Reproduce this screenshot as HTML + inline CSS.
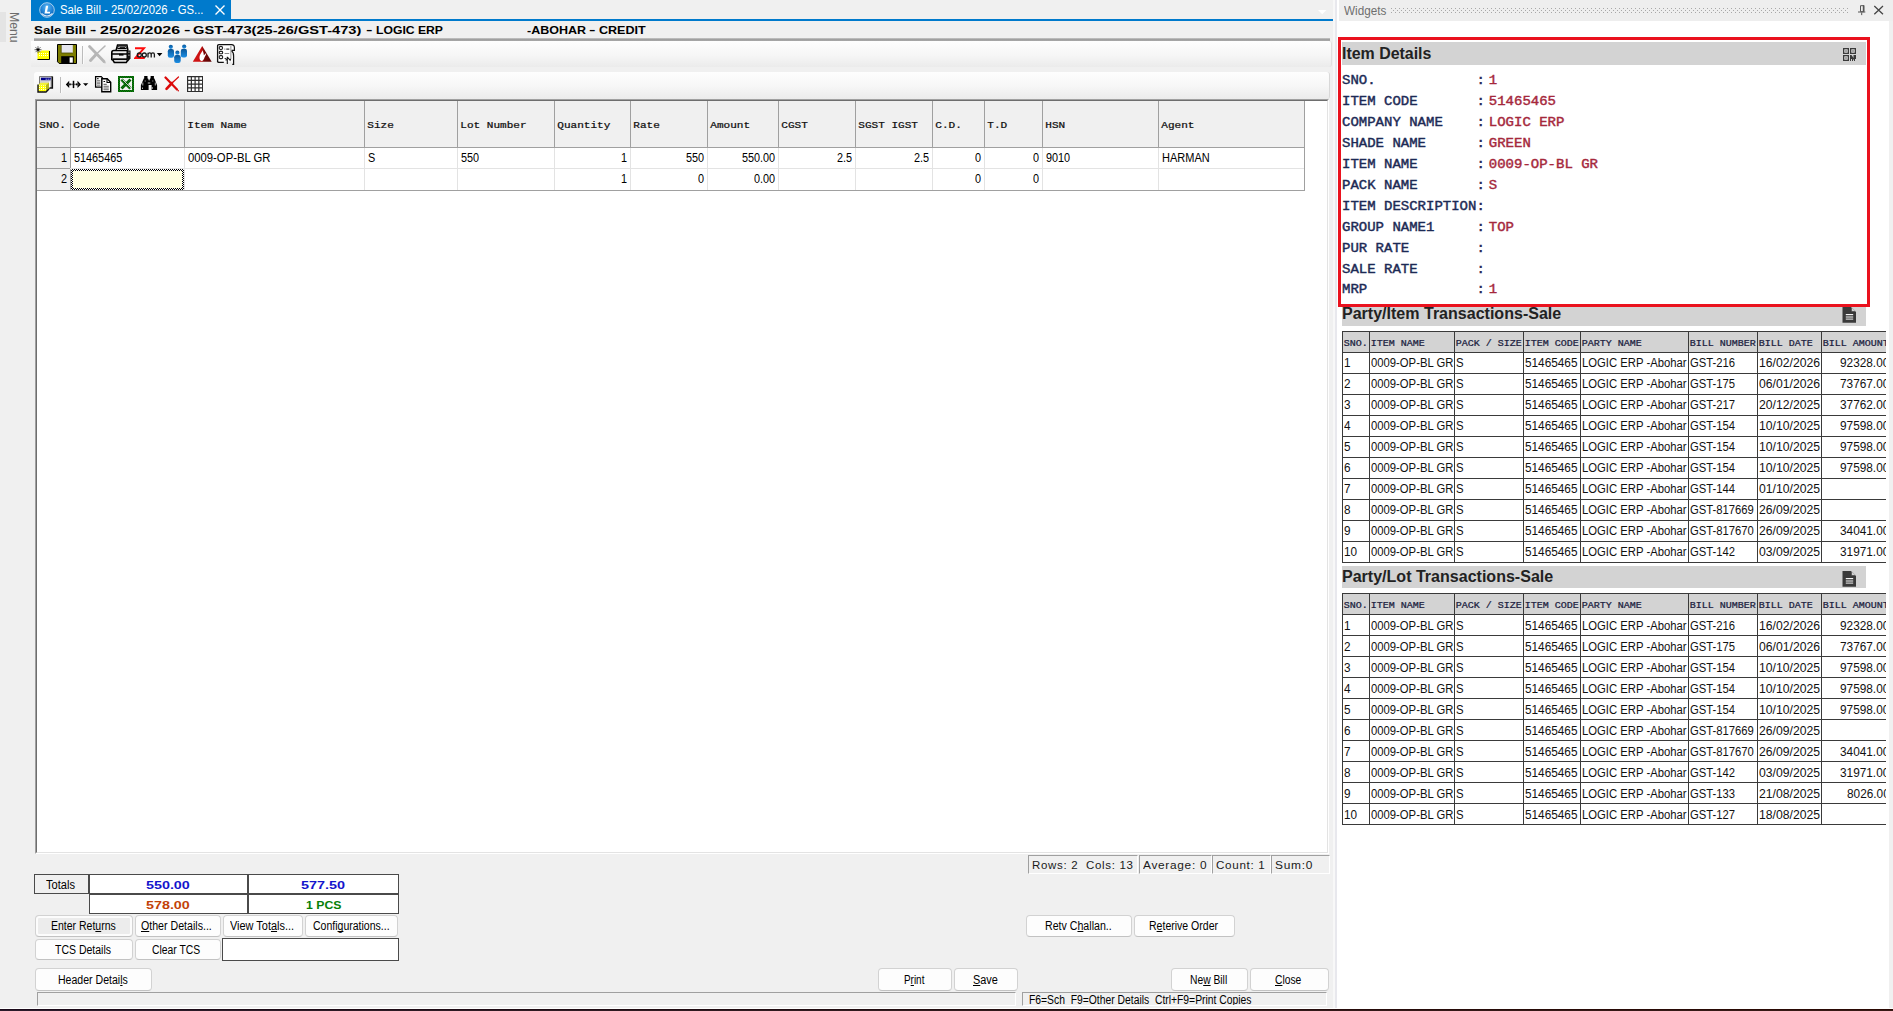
<!DOCTYPE html>
<html>
<head>
<meta charset="utf-8">
<title>Sale Bill</title>
<style>
*{box-sizing:border-box;margin:0;padding:0}
html,body{width:1893px;height:1011px;overflow:hidden;background:#f0f0f0;font-family:"Liberation Sans",sans-serif;font-size:11px;color:#000}
.a{position:absolute}
.t{position:absolute;white-space:pre;line-height:1}
.gh{position:absolute;top:101px;height:46px;border-right:1px solid #a0a0a0}
.btn{position:absolute;border:1px solid #d2d2d2;border-bottom-color:#c2c2c2;border-radius:4px;background:#fdfdfd}
u{text-decoration:underline;text-underline-offset:1px;text-decoration-thickness:1px;text-decoration-skip-ink:none}
.tot{position:absolute;height:20px;border:1px solid #4a4a4a;background:#fff}
.sc{position:absolute;top:855px;height:19px;border-top:1px solid #a0a0a0;border-left:1px solid #a0a0a0;border-right:1px solid #fff;border-bottom:1px solid #fff}
.wh{position:absolute;left:1342px;height:23px;background:#d3d3d3}
.wt{position:absolute;left:1342px;width:544px;overflow:hidden}
.wt .c{position:absolute;height:21px;border-left:1px solid #3a3a3a;border-top:1px solid #3a3a3a;overflow:hidden}
.wt .h{background:#d3d3d3}
</style>
</head>
<body>
<div class="a" style="left:0;top:0;width:31px;height:1008px;background:#f0f0f0"></div>
<div class="a" style="left:0;top:12px;width:6px;height:30px;background:#e4e4e4"></div>
<div class="t" style="left:20px;top:12.3px;font-size:12.2px;color:#6c6c6c;transform-origin:0 0;transform:rotate(90deg)">Menu</div>
<div class="a" style="left:31px;top:0;width:200px;height:20px;background:#007acc"></div>
<div class="a" style="left:31px;top:19px;width:1302px;height:2px;background:#007acc"></div>
<svg class="a" style="left:38.600px;top:1.600px" width="16" height="16" viewBox="0 0 16 16"><defs><radialGradient id="lg" cx=".5" cy=".3" r=".75"><stop offset="0" stop-color="#58b4f4"/><stop offset=".6" stop-color="#1a7cd2"/><stop offset="1" stop-color="#0a58a8"/></radialGradient></defs><circle cx="8" cy="8" r="7.300" fill="url(#lg)" stroke="#b8d8f0" stroke-width=".9"/><path d="M2.500 11.500q5.500 5 11 0" fill="none" stroke="#e8f4ff" stroke-width="1.100" opacity=".9"/><path d="M6.900 3.800h2.300l-1.100 5.900h3.100l-.35 1.900H5.500z" fill="#fff"/></svg>
<svg class="a" style="left:214px;top:4px" width="12" height="12" viewBox="0 0 12 12"><path d="M1.5 1.5l9 9M10.5 1.5l-9 9" stroke="#fff" stroke-width="1.4"/></svg>
<svg class="a" style="left:1318px;top:10px" width="9" height="5" viewBox="0 0 9 5"><path d="M0 0h8.400L4.200 4.300z" fill="#fff"/></svg>
<div class="t" style="left:60.0px;top:4.0px;font-family:'Liberation Sans',sans-serif;font-size:12px;color:#fff;transform-origin:0 0;transform:scaleX(0.9435);">Sale Bill - 25/02/2026 - GS...</div><div class="t" style="left:34.0px;top:25.0px;font-family:'Liberation Sans',sans-serif;font-size:11px;font-weight:bold;color:#000;transform-origin:0 0;transform:scaleX(1.2127);">Sale Bill</div><div class="t" style="left:90.2px;top:24.0px;font-family:'Liberation Sans',sans-serif;font-size:11px;font-weight:bold;color:#000;transform-origin:0 0;transform:scaleX(1.7702);">-</div><div class="t" style="left:100.4px;top:25.0px;font-family:'Liberation Sans',sans-serif;font-size:11px;font-weight:bold;color:#000;transform-origin:0 0;transform:scaleX(1.4565);">25/02/2026</div><div class="t" style="left:183.7px;top:24.0px;font-family:'Liberation Sans',sans-serif;font-size:11px;font-weight:bold;color:#000;transform-origin:0 0;transform:scaleX(1.7702);">-</div><div class="t" style="left:193.2px;top:25.0px;font-family:'Liberation Sans',sans-serif;font-size:11px;font-weight:bold;color:#000;transform-origin:0 0;transform:scaleX(1.3298);">GST-473(25-26/GST-473)</div><div class="t" style="left:366.0px;top:24.0px;font-family:'Liberation Sans',sans-serif;font-size:11px;font-weight:bold;color:#000;transform-origin:0 0;transform:scaleX(1.7702);">-</div><div class="t" style="left:376.0px;top:25.0px;font-family:'Liberation Sans',sans-serif;font-size:11px;font-weight:bold;color:#000;transform-origin:0 0;transform:scaleX(1.1072);">LOGIC ERP</div><div class="t" style="left:526.6px;top:25.0px;font-family:'Liberation Sans',sans-serif;font-size:11px;font-weight:bold;color:#000;transform-origin:0 0;transform:scaleX(1.1356);">-ABOHAR</div><div class="t" style="left:588.6px;top:24.0px;font-family:'Liberation Sans',sans-serif;font-size:11px;font-weight:bold;color:#000;transform-origin:0 0;transform:scaleX(1.7702);">-</div><div class="t" style="left:598.8px;top:25.0px;font-family:'Liberation Sans',sans-serif;font-size:11px;font-weight:bold;color:#000;transform-origin:0 0;transform:scaleX(1.1403);">CREDIT</div><div class="a" style="left:34px;top:38px;width:1296px;height:3px;background:linear-gradient(#c8c8c8,#a0a0a0 50%,#a8a8a8)"></div>
<div class="a" style="left:31px;top:41px;width:1301px;height:26px;background:linear-gradient(#fefefe,#f6f6f6 55%,#ebebeb);border-radius:0 3px 3px 0;border-right:1px solid #e0e0e0"></div>
<div class="a" style="left:34px;top:72px;width:1296px;height:27px;background:linear-gradient(#fefefe,#f6f6f6 55%,#ebebeb);border-radius:3px;border-right:1px solid #d8d8d8"></div>
<!-- toolbar 1 icons -->
<svg class="a" style="left:33px;top:45px" width="18" height="16" viewBox="0 0 18 16"><defs><pattern id="yd" width="2" height="2" patternUnits="userSpaceOnUse"><rect width="2" height="2" fill="#ffff00"/><rect width="1" height="1" fill="#fffff0"/></pattern></defs><path d="M4.500 6.500h3l1 -1h8v9h-12z" fill="#ffff00"/><rect x="5.500" y="8" width="10.500" height="4" fill="url(#yd)"/><path d="M4.500 14.500h12v-8.500" fill="none" stroke="#000" stroke-width="1"/><path d="M5 1.200v7M1.500 4.700h7M2.500 2.200l5 5M7.500 2.200l-5 5" stroke="#444" stroke-width=".8"/><path d="M5 3.200v3M3.500 4.700h3" stroke="#000" stroke-width="1.200"/></svg>
<svg class="a" style="left:56px;top:43px" width="22" height="22" viewBox="0 0 22 22"><path d="M1 1h20v20h-18.500l-1.500-1.500z" fill="#fff" opacity=".85"/><path d="M1.500 1.500h19v19h-17.300l-1.700-1.700z" fill="#7d7d00" stroke="#000" stroke-width="1"/><rect x="5.200" y="2" width="11.600" height="8" fill="#e6e6ee"/><path d="M5.200 2v8h11.600" fill="none" stroke="#4a4a00" stroke-width=".8"/><rect x="5.200" y="13.200" width="12.600" height="7.300" fill="#000"/><rect x="13.600" y="14.400" width="3.200" height="5.300" fill="#fff"/></svg>
<div class="a" style="left:82px;top:46px;width:1px;height:18px;background:#bcbcbc"></div><div class="a" style="left:83px;top:46px;width:1px;height:18px;background:#fbfbfb"></div>
<svg class="a" style="left:87px;top:44px" width="20" height="20" viewBox="0 0 20 20"><path d="M2.500 2.500L17 17.500" stroke="#b6b6b6" stroke-width="2.800" stroke-linecap="round"/><path d="M18 2L9.500 10" stroke="#b6b6b6" stroke-width="1.600" stroke-linecap="round"/><path d="M9.500 10L3.500 16.500" stroke="#b6b6b6" stroke-width="3" stroke-linecap="round"/><circle cx="18" cy="18.700" r=".7" fill="#b6b6b6"/></svg>
<svg class="a" style="left:110px;top:43px" width="22" height="21" viewBox="0 0 22 21"><path d="M6 7.500l1.500-5.500h9.500l1 5.500" fill="#fff" stroke="#000" stroke-width="1.400"/><path d="M7.500 5.500l.8-2.500h7.500l.7 2.500z" fill="#fff" stroke="#000" stroke-width="1"/><path d="M9.500 4.300h5.500" stroke="#000" stroke-width="1.100"/><path d="M1.800 9.500q0-2 2-2h13.500v9h-15.500z" fill="#eee" stroke="#000" stroke-width="1.600"/><path d="M17.300 7.500h3.200v8l-3.200 4z" fill="#111"/><rect x="18.300" y="8.500" width="1.300" height="1.500" fill="#888"/><rect x="18.300" y="11.500" width="1.300" height="1.500" fill="#888"/><path d="M2 11h15" stroke="#000" stroke-width="1.500"/><path d="M9 11.700h4.500" stroke="#000" stroke-width="1.800"/><path d="M2.500 16.500l1.800 3h12l1.500-3" fill="#ddd" stroke="#000" stroke-width="1.500"/><path d="M3 16.200h14" stroke="#000" stroke-width="1.500"/></svg>
<svg class="a" style="left:134px;top:46px" width="30" height="16" viewBox="0 0 30 16"><path d="M1 2.300h9L1.300 12h9.500" fill="none" stroke="#ff0a0a" stroke-width="1.900"/><g fill="none" stroke="#1a1a1a" stroke-width="1.300"><circle cx="5.300" cy="9" r="2"/><circle cx="10.300" cy="9" r="2"/><path d="M14 6.700v4.800M14 8.500q.2-1.700 1.700-1.700t1.500 1.700v3M17.200 8.500q.2-1.700 1.700-1.700t1.500 1.700v3"/></g><path d="M22.800 7.100h5.600l-2.800 3.100z" fill="#000"/></svg>
<svg class="a" style="left:167px;top:44px" width="22" height="20" viewBox="0 0 22 20"><defs><linearGradient id="bg" x1="0" y1="0" x2="0" y2="1"><stop offset="0" stop-color="#0a5596"/><stop offset="1" stop-color="#1c8fe6"/></linearGradient></defs><g fill="url(#bg)"><circle cx="3.800" cy="2.800" r="2.100"/><rect x=".8" y="5" width="6.200" height="8.800" rx="2.200"/><circle cx="17.200" cy="2.500" r="2.100"/><rect x="13.800" y="4.700" width="6.200" height="8.800" rx="2.200"/><circle cx="10.400" cy="8.700" r="2.100"/><rect x="7.200" y="11" width="6.500" height="8" rx="2.200"/></g></svg>
<svg class="a" style="left:192px;top:45px" width="21" height="18" viewBox="0 0 21 18"><defs><linearGradient id="rg" x1="0" y1="0" x2="1" y2="0"><stop offset="0" stop-color="#d41414"/><stop offset=".45" stop-color="#c81010"/><stop offset=".6" stop-color="#7a0606"/><stop offset="1" stop-color="#5a0303"/></linearGradient></defs><path d="M10.200 1l9.500 15.800H.8z" fill="url(#rg)"/><path d="M10.500 5.200c.7 1.700 1.300 3.300 1.300 5 .8-.5 1.600-1.300 2.300-2.200.3 1-.6 2.700-1.500 4.200-.6 1.400-1.200 3.600-2.600 3.800-1.600.1-2.500-1.400-2.500-3.300 0-1.800.8-3.300 1.600-4.600.6-1 1.100-1.900 1.400-2.900z" fill="#fff"/></svg>
<svg class="a" style="left:216px;top:43px" width="20" height="22" viewBox="0 0 20 22"><path d="M1.600 2h14.500v16.700h-14.500z" fill="#fff"/><path d="M1.600 19V2.800q0-1.200 1.200-1.200h13.500" fill="none" stroke="#111" stroke-width="1.300"/><path d="M1.600 18.500q.2.800 1 .8h5.200" fill="none" stroke="#111" stroke-width="1.200"/><path d="M15 1.600q3.400-.2 3.400 3.200v2.500h-3.200" fill="#fff" stroke="#111" stroke-width="1.200"/><rect x="14" y="2.600" width="1.600" height="13.500" fill="#b8b8b8"/><path d="M15.600 8q2.200 1.300 2 5v8.300h-1.300" fill="none" stroke="#111" stroke-width="1.200"/><g fill="none" stroke="#222" stroke-width="1.100"><ellipse cx="4.900" cy="5" rx="1.700" ry="1.600"/><rect x="3.300" y="8.400" width="3.300" height="2.400" rx=".9"/><rect x="3.300" y="12.600" width="3.300" height="3" rx="1"/></g><path d="M8.600 6.200h.6M10.300 6.100h3" stroke="#333" stroke-width="1.200"/><path d="M8.600 10.500h4.600" stroke="#888" stroke-width="1"/><path d="M8.600 15.500h1.800" stroke="#333" stroke-width="1.100"/><path d="M11.300 13.800v7.300M11.300 14l2.800 3.200 .5-1.300M9.600 17.300l1.700-1.200" fill="none" stroke="#111" stroke-width="1.100"/></svg>
<!-- toolbar 2 icons -->
<svg class="a" style="left:37px;top:75px" width="17" height="18" viewBox="0 0 17 18"><rect x="2.500" y="1.500" width="13" height="11.500" fill="#d2d2d2"/><path d="M2.500 13V1.500h13" fill="none" stroke="#7a7a7a" stroke-width="1"/><path d="M15.300 1.500v11.500h-4" fill="none" stroke="#111" stroke-width="1.600"/><rect x="4" y="2.700" width="10" height="2.500" fill="#00008a"/><path d="M8.700 4.200h1M10.700 4.200h1M12.700 4.200h1" stroke="#fff" stroke-width=".9"/><path d="M12.500 6.500v6" stroke="#fff" stroke-width="1"/><path d="M1 10l2.500-2.300h8.500v6.300l-3 3h-8z" fill="#f2f23a"/><rect x="1.500" y="10.300" width="7.300" height="6.400" fill="url(#yd)"/><path d="M9 10l3-2.300v6.300l-3 3z" fill="#b4b41a"/><path d="M1 9.500v7.500h8l3-3" fill="none" stroke="#111" stroke-width="1.400"/></svg>
<div class="a" style="left:60px;top:77px;width:1px;height:16px;background:#bcbcbc"></div><div class="a" style="left:61px;top:77px;width:1px;height:16px;background:#fbfbfb"></div>
<svg class="a" style="left:65px;top:80px" width="24" height="10" viewBox="0 0 24 10"><path d="M.8 4.400l3.400-3.700v7.400zM15.900 4.400l-3.400-3.700v7.400z" fill="#000"/><path d="M3.500 4.400h10" stroke="#777" stroke-width="1.500"/><path d="M8.500 .8v7.300" stroke="#000" stroke-width="1.500"/><path d="M4.200 3.600h1.500v1.600h-1.500zM11 3.600h1.500v1.600h-1.500z" fill="#000"/><path d="M18 3.200h5.300l-2.650 2.900z" fill="#000"/></svg>
<svg class="a" style="left:94px;top:75px" width="18" height="18" viewBox="0 0 18 18"><path d="M1.600 1.600h5.600l1.300 1.300v9.300h-6.900z" fill="#fff" stroke="#000" stroke-width="1.300"/><path d="M3 3.700h1.600" stroke="#000" stroke-width="1"/><path d="M3 5.700h3.300M3 7.200h3.300M3 8.700h3.300M3 10.200h3.300" stroke="#777" stroke-width="1"/><path d="M7.800 3.800h5.400l3.500 3.500v9.500h-8.900z" fill="#fff" stroke="#000" stroke-width="1.400"/><path d="M13 3.800v3.700h3.700" fill="none" stroke="#000" stroke-width="1.100"/><path d="M9.500 6.500h1.600" stroke="#000" stroke-width="1"/><path d="M9.500 9.300h3.300" stroke="#555" stroke-width="1"/><path d="M9.500 11.300h5.300M9.500 13h5.300M9.500 14.700h5.300" stroke="#666" stroke-width="1.100"/></svg>
<svg class="a" style="left:117px;top:75px" width="18" height="18" viewBox="0 0 18 18"><defs><pattern id="gc" width="2" height="2" patternUnits="userSpaceOnUse"><rect width="2" height="2" fill="#0a8a0a"/><rect width="1" height="1" fill="#064d06"/><rect x="1" y="1" width="1" height="1" fill="#064d06"/></pattern></defs><rect x="1" y="1" width="16" height="16" fill="url(#gc)"/><rect x="3" y="3" width="12" height="12" fill="#f2f2f2"/><path d="M4.500 4.500l9 9M13.500 4.500l-9 9" stroke="url(#gc)" stroke-width="3"/><path d="M5.500 4.500l8.500 8.500" stroke="#f2f2f2" stroke-width=".8"/></svg>
<svg class="a" style="left:140px;top:75px" width="18" height="16" viewBox="0 0 18 16"><g fill="#000"><rect x="4.200" y="1" width="3.300" height="3"/><rect x="10.600" y="1" width="3.300" height="3"/><path d="M3.800 3.500h4.300l.9 2.300h.2l.9-2.300h4.300l2.700 6.700v4.800h-5.500v-5h-3v5H.9v-4.800z"/></g><path d="M7.800 8h2.500" stroke="#666" stroke-width="2"/><path d="M2.800 7.500v3M5.200 5.500v1M12.800 5.500v1M15.300 7.500v3M2.500 12.500v1.500M12.200 12v2" stroke="#ddd" stroke-width=".8"/></svg>
<svg class="a" style="left:164px;top:76px" width="16" height="16" viewBox="0 0 16 16"><path d="M1.500 1.500L13 13.500" stroke="#dc0a0a" stroke-width="2.200" stroke-linecap="round"/><path d="M14.500 1L8 7" stroke="#dc0a0a" stroke-width="1.200" stroke-linecap="round"/><path d="M8 7L2.500 12.800" stroke="#dc0a0a" stroke-width="2.600" stroke-linecap="round"/><circle cx="14.300" cy="14.700" r=".7" fill="#c00"/></svg>
<svg class="a" style="left:187px;top:76px" width="16" height="16" viewBox="0 0 16 16"><rect x=".5" y=".5" width="15.400" height="15.400" fill="#fff"/><path d="M.6 .6h15v15H.6zM.6 4.350h15M.6 8.100h15M.6 11.850h15M4.350 .6v15M8.100 .6v15M11.850 .6v15" fill="none" stroke="#2e2e2e" stroke-width="1.200"/></svg>
<div class="a" style="left:35px;top:99px;width:1294px;height:755px;background:#fff;border:1px solid;border-color:#a0a0a0 #fff #fff #a0a0a0"></div><div class="a" style="left:36px;top:100px;width:1292px;height:753px;border:1px solid;border-color:#6e6e6e #e3e3e3 #e3e3e3 #6e6e6e"></div>
<div class="a" style="left:37px;top:101px;width:1268px;height:47px;background:#f0f0f0;border-bottom:1px solid #a0a0a0"></div>
<div class="gh" style="left:37px;width:34px"></div><div class="t" style="left:39.3px;top:119.8px;font-family:'Liberation Mono',monospace;font-size:11.05px;color:#111;-webkit-text-stroke:.28px #111;transform-origin:0 8.2px;transform:scaleY(.88)">SNO.</div><div class="gh" style="left:71px;width:114px"></div><div class="t" style="left:73.3px;top:119.8px;font-family:'Liberation Mono',monospace;font-size:11.05px;color:#111;-webkit-text-stroke:.28px #111;transform-origin:0 8.2px;transform:scaleY(.88)">Code</div><div class="gh" style="left:185px;width:180px"></div><div class="t" style="left:187.3px;top:119.8px;font-family:'Liberation Mono',monospace;font-size:11.05px;color:#111;-webkit-text-stroke:.28px #111;transform-origin:0 8.2px;transform:scaleY(.88)">Item Name</div><div class="gh" style="left:365px;width:93px"></div><div class="t" style="left:367.3px;top:119.8px;font-family:'Liberation Mono',monospace;font-size:11.05px;color:#111;-webkit-text-stroke:.28px #111;transform-origin:0 8.2px;transform:scaleY(.88)">Size</div><div class="gh" style="left:458px;width:97px"></div><div class="t" style="left:460.3px;top:119.8px;font-family:'Liberation Mono',monospace;font-size:11.05px;color:#111;-webkit-text-stroke:.28px #111;transform-origin:0 8.2px;transform:scaleY(.88)">Lot Number</div><div class="gh" style="left:555px;width:76px"></div><div class="t" style="left:557.3px;top:119.8px;font-family:'Liberation Mono',monospace;font-size:11.05px;color:#111;-webkit-text-stroke:.28px #111;transform-origin:0 8.2px;transform:scaleY(.88)">Quantity</div><div class="gh" style="left:631px;width:77px"></div><div class="t" style="left:633.3px;top:119.8px;font-family:'Liberation Mono',monospace;font-size:11.05px;color:#111;-webkit-text-stroke:.28px #111;transform-origin:0 8.2px;transform:scaleY(.88)">Rate</div><div class="gh" style="left:708px;width:71px"></div><div class="t" style="left:710.3px;top:119.8px;font-family:'Liberation Mono',monospace;font-size:11.05px;color:#111;-webkit-text-stroke:.28px #111;transform-origin:0 8.2px;transform:scaleY(.88)">Amount</div><div class="gh" style="left:779px;width:77px"></div><div class="t" style="left:781.3px;top:119.8px;font-family:'Liberation Mono',monospace;font-size:11.05px;color:#111;-webkit-text-stroke:.28px #111;transform-origin:0 8.2px;transform:scaleY(.88)">CGST</div><div class="gh" style="left:856px;width:77px"></div><div class="t" style="left:858.3px;top:119.8px;font-family:'Liberation Mono',monospace;font-size:11.05px;color:#111;-webkit-text-stroke:.28px #111;transform-origin:0 8.2px;transform:scaleY(.88)">SGST IGST</div><div class="gh" style="left:933px;width:52px"></div><div class="t" style="left:935.3px;top:119.8px;font-family:'Liberation Mono',monospace;font-size:11.05px;color:#111;-webkit-text-stroke:.28px #111;transform-origin:0 8.2px;transform:scaleY(.88)">C.D.</div><div class="gh" style="left:985px;width:58px"></div><div class="t" style="left:987.3px;top:119.8px;font-family:'Liberation Mono',monospace;font-size:11.05px;color:#111;-webkit-text-stroke:.28px #111;transform-origin:0 8.2px;transform:scaleY(.88)">T.D</div><div class="gh" style="left:1043px;width:116px"></div><div class="t" style="left:1045.3px;top:119.8px;font-family:'Liberation Mono',monospace;font-size:11.05px;color:#111;-webkit-text-stroke:.28px #111;transform-origin:0 8.2px;transform:scaleY(.88)">HSN</div><div class="gh" style="left:1159px;width:146px"></div><div class="t" style="left:1161.3px;top:119.8px;font-family:'Liberation Mono',monospace;font-size:11.05px;color:#111;-webkit-text-stroke:.28px #111;transform-origin:0 8.2px;transform:scaleY(.88)">Agent</div>
<div class="a" style="left:37px;top:148px;width:33px;height:42px;background:#f0f0f0"></div><div class="a" style="left:70px;top:148px;width:1px;height:42px;background:#a0a0a0"></div><div class="a" style="left:37px;top:168px;width:1268px;height:1px;background:#e3e3e3"></div><div class="a" style="left:37px;top:168px;width:33px;height:1px;background:#a0a0a0"></div><div class="a" style="left:37px;top:190px;width:1268px;height:1px;background:#a0a0a0"></div><div class="a" style="left:1304px;top:148px;width:1px;height:43px;background:#a0a0a0"></div><div class="a" style="left:184px;top:148px;width:1px;height:42px;background:#e3e3e3"></div><div class="a" style="left:364px;top:148px;width:1px;height:42px;background:#e3e3e3"></div><div class="a" style="left:457px;top:148px;width:1px;height:42px;background:#e3e3e3"></div><div class="a" style="left:554px;top:148px;width:1px;height:42px;background:#e3e3e3"></div><div class="a" style="left:630px;top:148px;width:1px;height:42px;background:#e3e3e3"></div><div class="a" style="left:707px;top:148px;width:1px;height:42px;background:#e3e3e3"></div><div class="a" style="left:778px;top:148px;width:1px;height:42px;background:#e3e3e3"></div><div class="a" style="left:855px;top:148px;width:1px;height:42px;background:#e3e3e3"></div><div class="a" style="left:932px;top:148px;width:1px;height:42px;background:#e3e3e3"></div><div class="a" style="left:984px;top:148px;width:1px;height:42px;background:#e3e3e3"></div><div class="a" style="left:1042px;top:148px;width:1px;height:42px;background:#e3e3e3"></div><div class="a" style="left:1158px;top:148px;width:1px;height:42px;background:#e3e3e3"></div>
<div class="t" style="left:61.0px;top:151.8px;font-family:'Liberation Sans',sans-serif;font-size:12px;color:#000;transform-origin:0 0;transform:scaleX(0.9030);">1</div><div class="t" style="left:74.0px;top:151.8px;font-family:'Liberation Sans',sans-serif;font-size:12px;color:#000;transform-origin:0 0;transform:scaleX(0.9030);">51465465</div><div class="t" style="left:188.0px;top:151.8px;font-family:'Liberation Sans',sans-serif;font-size:12px;color:#000;transform-origin:0 0;transform:scaleX(0.9405);">0009-OP-BL GR</div><div class="t" style="left:368.0px;top:151.8px;font-family:'Liberation Sans',sans-serif;font-size:12px;color:#000;transform-origin:0 0;transform:scaleX(0.9030);">S</div><div class="t" style="left:461.0px;top:151.8px;font-family:'Liberation Sans',sans-serif;font-size:12px;color:#000;transform-origin:0 0;transform:scaleX(0.9030);">550</div><div class="t" style="left:621.0px;top:151.8px;font-family:'Liberation Sans',sans-serif;font-size:12px;color:#000;transform-origin:0 0;transform:scaleX(0.9030);">1</div><div class="t" style="left:685.9px;top:151.8px;font-family:'Liberation Sans',sans-serif;font-size:12px;color:#000;transform-origin:0 0;transform:scaleX(0.9030);">550</div><div class="t" style="left:741.9px;top:151.8px;font-family:'Liberation Sans',sans-serif;font-size:12px;color:#000;transform-origin:0 0;transform:scaleX(0.9030);">550.00</div><div class="t" style="left:836.9px;top:151.8px;font-family:'Liberation Sans',sans-serif;font-size:12px;color:#000;transform-origin:0 0;transform:scaleX(0.9030);">2.5</div><div class="t" style="left:913.9px;top:151.8px;font-family:'Liberation Sans',sans-serif;font-size:12px;color:#000;transform-origin:0 0;transform:scaleX(0.9030);">2.5</div><div class="t" style="left:975.0px;top:151.8px;font-family:'Liberation Sans',sans-serif;font-size:12px;color:#000;transform-origin:0 0;transform:scaleX(0.9030);">0</div><div class="t" style="left:1033.0px;top:151.8px;font-family:'Liberation Sans',sans-serif;font-size:12px;color:#000;transform-origin:0 0;transform:scaleX(0.9030);">0</div><div class="t" style="left:1046.0px;top:151.8px;font-family:'Liberation Sans',sans-serif;font-size:12px;color:#000;transform-origin:0 0;transform:scaleX(0.9030);">9010</div><div class="t" style="left:1162.0px;top:151.8px;font-family:'Liberation Sans',sans-serif;font-size:12px;color:#000;transform-origin:0 0;transform:scaleX(0.9167);">HARMAN</div><div class="t" style="left:61.0px;top:172.8px;font-family:'Liberation Sans',sans-serif;font-size:12px;color:#000;transform-origin:0 0;transform:scaleX(0.9030);">2</div><div class="t" style="left:621.0px;top:172.8px;font-family:'Liberation Sans',sans-serif;font-size:12px;color:#000;transform-origin:0 0;transform:scaleX(0.9030);">1</div><div class="t" style="left:698.0px;top:172.8px;font-family:'Liberation Sans',sans-serif;font-size:12px;color:#000;transform-origin:0 0;transform:scaleX(0.9030);">0</div><div class="t" style="left:753.9px;top:172.8px;font-family:'Liberation Sans',sans-serif;font-size:12px;color:#000;transform-origin:0 0;transform:scaleX(0.9030);">0.00</div><div class="t" style="left:975.0px;top:172.8px;font-family:'Liberation Sans',sans-serif;font-size:12px;color:#000;transform-origin:0 0;transform:scaleX(0.9030);">0</div><div class="t" style="left:1033.0px;top:172.8px;font-family:'Liberation Sans',sans-serif;font-size:12px;color:#000;transform-origin:0 0;transform:scaleX(0.9030);">0</div>
<div class="a" style="left:71px;top:169px;width:113px;height:21px;background:repeating-conic-gradient(#000 0 25%,#fff 0 50%) 0 0/2px 2px"></div><div class="a" style="left:73px;top:171px;width:109px;height:17px;background:#ffffe1"></div>
<div class="sc" style="left:1028px;width:110px"></div><div class="t" style="left:1032.4px;top:859.5px;font-family:'Liberation Sans',sans-serif;font-size:11px;color:#1a1a1a;letter-spacing:.65px;transform-origin:0 0;transform:scaleX(1.0446);">Rows: 2  Cols: 13</div><div class="sc" style="left:1139px;width:73px"></div><div class="t" style="left:1143.0px;top:859.5px;font-family:'Liberation Sans',sans-serif;font-size:11px;color:#1a1a1a;letter-spacing:.65px;transform-origin:0 0;transform:scaleX(1.0787);">Average: 0</div><div class="sc" style="left:1212px;width:59px"></div><div class="t" style="left:1216.0px;top:859.5px;font-family:'Liberation Sans',sans-serif;font-size:11px;color:#1a1a1a;letter-spacing:.65px;transform-origin:0 0;transform:scaleX(1.0578);">Count: 1</div><div class="sc" style="left:1271px;width:59px"></div><div class="t" style="left:1274.8px;top:859.5px;font-family:'Liberation Sans',sans-serif;font-size:11px;color:#1a1a1a;letter-spacing:.65px;transform-origin:0 0;transform:scaleX(1.0843);">Sum:0</div>
<div class="a" style="left:34px;top:874px;width:55px;height:20px;border:1px solid #4a4a4a;background:#f0f0f0"></div><div class="t" style="left:46.0px;top:878.8px;font-family:'Liberation Sans',sans-serif;font-size:12px;transform-origin:0 0;transform:scaleX(0.9248);">Totals</div><div class="tot" style="left:89px;top:874px;width:159px"></div><div class="tot" style="left:248px;top:874px;width:151px"></div><div class="tot" style="left:89px;top:894px;width:159px"></div><div class="tot" style="left:248px;top:894px;width:151px"></div><div class="t" style="left:146.2px;top:880.0px;font-family:'Liberation Sans',sans-serif;font-size:11px;font-weight:bold;color:#1414cc;transform-origin:0 0;transform:scaleX(1.3014);">550.00</div><div class="t" style="left:301.2px;top:880.0px;font-family:'Liberation Sans',sans-serif;font-size:11px;font-weight:bold;color:#1414cc;transform-origin:0 0;transform:scaleX(1.3073);">577.50</div><div class="t" style="left:146.2px;top:900.0px;font-family:'Liberation Sans',sans-serif;font-size:11px;font-weight:bold;color:#c24208;transform-origin:0 0;transform:scaleX(1.3014);">578.00</div><div class="t" style="left:305.8px;top:900.0px;font-family:'Liberation Sans',sans-serif;font-size:11px;font-weight:bold;color:#068006;transform-origin:0 0;transform:scaleX(1.1133);">1 PCS</div>
<div class="btn" style="left:35px;top:915px;width:98px;height:22px;background:#ececec;box-shadow:inset 0 0 0 2px #fcfcfc"></div><div class="t" style="left:51.0px;top:919.8px;font-family:'Liberation Sans',sans-serif;font-size:12px;color:#000;transform-origin:0 0;transform:scaleX(0.8749);">Enter Ret<u>u</u>rns</div><div class="btn" style="left:135px;top:915px;width:86px;height:22px;"></div><div class="t" style="left:141.2px;top:919.8px;font-family:'Liberation Sans',sans-serif;font-size:12px;color:#000;transform-origin:0 0;transform:scaleX(0.8845);"><u>O</u>ther Details...</div><div class="btn" style="left:223px;top:915px;width:80px;height:22px;"></div><div class="t" style="left:230.2px;top:919.8px;font-family:'Liberation Sans',sans-serif;font-size:12px;color:#000;transform-origin:0 0;transform:scaleX(0.9120);">View Tot<u>a</u>ls...</div><div class="btn" style="left:305px;top:915px;width:93px;height:22px;"></div><div class="t" style="left:312.5px;top:919.8px;font-family:'Liberation Sans',sans-serif;font-size:12px;color:#000;transform-origin:0 0;transform:scaleX(0.8764);">Confi<u>g</u>urations...</div><div class="btn" style="left:35px;top:939px;width:98px;height:21px;"></div><div class="t" style="left:54.8px;top:943.7px;font-family:'Liberation Sans',sans-serif;font-size:12px;color:#000;transform-origin:0 0;transform:scaleX(0.8748);">TCS Details</div><div class="btn" style="left:135px;top:939px;width:86px;height:21px;"></div><div class="t" style="left:152.3px;top:943.7px;font-family:'Liberation Sans',sans-serif;font-size:12px;color:#000;transform-origin:0 0;transform:scaleX(0.8656);">Clear TCS</div><div class="a" style="left:222px;top:938px;width:177px;height:23px;border:1px solid #4a4a4a;background:#fff"></div><div class="btn" style="left:35px;top:968px;width:117px;height:22.5px;"></div><div class="t" style="left:57.9px;top:973.8px;font-family:'Liberation Sans',sans-serif;font-size:12px;color:#000;transform-origin:0 0;transform:scaleX(0.8792);">Header Detai<u>l</u>s</div><div class="btn" style="left:1026px;top:915px;width:106px;height:22px;"></div><div class="t" style="left:1045.2px;top:919.8px;font-family:'Liberation Sans',sans-serif;font-size:12px;color:#000;transform-origin:0 0;transform:scaleX(0.8845);">Retv C<u>h</u>allan..</div><div class="btn" style="left:1134px;top:915px;width:101px;height:22px;"></div><div class="t" style="left:1149.1px;top:919.8px;font-family:'Liberation Sans',sans-serif;font-size:12px;color:#000;transform-origin:0 0;transform:scaleX(0.8765);">R<u>e</u>terive Order</div><div class="btn" style="left:878px;top:968px;width:74px;height:22.5px;"></div><div class="t" style="left:904.0px;top:973.8px;font-family:'Liberation Sans',sans-serif;font-size:12px;color:#000;transform-origin:0 0;transform:scaleX(0.8258);">P<u>r</u>int</div><div class="btn" style="left:954px;top:968px;width:64px;height:22.5px;"></div><div class="t" style="left:972.7px;top:973.8px;font-family:'Liberation Sans',sans-serif;font-size:12px;color:#000;transform-origin:0 0;transform:scaleX(0.9096);"><u>S</u>ave</div><div class="btn" style="left:1171px;top:968px;width:77px;height:22.5px;"></div><div class="t" style="left:1190.2px;top:973.8px;font-family:'Liberation Sans',sans-serif;font-size:12px;color:#000;transform-origin:0 0;transform:scaleX(0.8579);">Ne<u>w</u> Bill</div><div class="btn" style="left:1250px;top:968px;width:79px;height:22.5px;"></div><div class="t" style="left:1275.4px;top:973.8px;font-family:'Liberation Sans',sans-serif;font-size:12px;color:#000;transform-origin:0 0;transform:scaleX(0.8570);"><u>C</u>lose</div>
<div class="a" style="left:37px;top:992px;width:979px;height:14px;border-top:1px solid #a0a0a0;border-left:1px solid #a0a0a0;border-bottom:1px solid #fff;border-right:1px solid #fff"></div><div class="a" style="left:1022px;top:992px;width:305px;height:14px;border-top:1px solid #a0a0a0;border-left:1px solid #a0a0a0;border-bottom:1px solid #fff;border-right:1px solid #fff;overflow:hidden"><div class="t" style="left:6px;top:.84px;font-family:'Liberation Sans',sans-serif;font-size:12px;color:#000;transform-origin:0 0;transform:scaleX(0.8620)">F6=Sch  F9=Other Details  Ctrl+F9=Print Copies</div></div>
<div class="a" style="left:1333px;top:0;width:2px;height:1008px;background:#f8f8f8"></div><div class="a" style="left:1335px;top:0;width:2px;height:1008px;background:#e8e8ed"></div>
<div class="a" style="left:1337px;top:0;width:556px;height:1008px;background:#fff"></div><div class="a" style="left:1339px;top:0;width:554px;height:21px;background:#eeeeee"></div><div class="a" style="left:1889px;top:21px;width:4px;height:987px;background:#f0f0f0"></div><div class="t" style="left:1344.3px;top:5.0px;font-family:'Liberation Sans',sans-serif;font-size:12px;color:#6e6e6e;transform-origin:0 0;transform:scaleX(0.9756);">Widgets</div><svg class="a" style="left:1391px;top:8px" width="457" height="5"><defs><pattern id="gp" width="4" height="4" patternUnits="userSpaceOnUse"><rect x="0" y="0" width="1" height="1" fill="#a8a8a8"/><rect x="2" y="2" width="1" height="1" fill="#a8a8a8"/></pattern></defs><rect width="457" height="5" fill="url(#gp)"/></svg><svg class="a" style="left:1857px;top:4px" width="10" height="12" viewBox="0 0 10 12"><path d="M3.5 1.7h3.3v6h-3.3z" fill="none" stroke="#555" stroke-width="1"/><rect x="5.8" y="1.2" width="1.5" height="6.3" fill="#555"/><rect x="1" y="7.5" width="7.3" height="1" fill="#555"/><rect x="4.2" y="8.5" width="1" height="2.6" fill="#555"/></svg><svg class="a" style="left:1873px;top:5px" width="11" height="10" viewBox="0 0 11 10"><path d="M1.3 1l8.700 8.300M10 1l-8.700 8.300" stroke="#444" stroke-width="1.250"/></svg>
<div class="wh" style="top:42px;width:524px"></div><div class="t" style="left:1342.3px;top:45.5px;font-family:'Liberation Sans',sans-serif;font-size:16px;font-weight:bold;color:#222;transform-origin:0 0;transform:scaleX(0.9954);">Item Details</div><div class="t" style="left:1342px;top:73px;font-family:'Liberation Mono',monospace;font-size:14px;color:#1c2a55;-webkit-text-stroke:.45px #1c2a55;transform-origin:0 10.75px;transform:scaleY(.85)">SNO.            :</div><div class="t" style="left:1488.800px;top:73px;font-family:'Liberation Mono',monospace;font-size:14px;color:#a5283c;-webkit-text-stroke:.45px #a5283c;transform-origin:0 10.75px;transform:scaleY(.85)">1</div><div class="t" style="left:1342px;top:94px;font-family:'Liberation Mono',monospace;font-size:14px;color:#1c2a55;-webkit-text-stroke:.45px #1c2a55;transform-origin:0 10.75px;transform:scaleY(.85)">ITEM CODE       :</div><div class="t" style="left:1488.800px;top:94px;font-family:'Liberation Mono',monospace;font-size:14px;color:#a5283c;-webkit-text-stroke:.45px #a5283c;transform-origin:0 10.75px;transform:scaleY(.85)">51465465</div><div class="t" style="left:1342px;top:115px;font-family:'Liberation Mono',monospace;font-size:14px;color:#1c2a55;-webkit-text-stroke:.45px #1c2a55;transform-origin:0 10.75px;transform:scaleY(.85)">COMPANY NAME    :</div><div class="t" style="left:1488.800px;top:115px;font-family:'Liberation Mono',monospace;font-size:14px;color:#a5283c;-webkit-text-stroke:.45px #a5283c;transform-origin:0 10.75px;transform:scaleY(.85)">LOGIC ERP</div><div class="t" style="left:1342px;top:136px;font-family:'Liberation Mono',monospace;font-size:14px;color:#1c2a55;-webkit-text-stroke:.45px #1c2a55;transform-origin:0 10.75px;transform:scaleY(.85)">SHADE NAME      :</div><div class="t" style="left:1488.800px;top:136px;font-family:'Liberation Mono',monospace;font-size:14px;color:#a5283c;-webkit-text-stroke:.45px #a5283c;transform-origin:0 10.75px;transform:scaleY(.85)">GREEN</div><div class="t" style="left:1342px;top:157px;font-family:'Liberation Mono',monospace;font-size:14px;color:#1c2a55;-webkit-text-stroke:.45px #1c2a55;transform-origin:0 10.75px;transform:scaleY(.85)">ITEM NAME       :</div><div class="t" style="left:1488.800px;top:157px;font-family:'Liberation Mono',monospace;font-size:14px;color:#a5283c;-webkit-text-stroke:.45px #a5283c;transform-origin:0 10.75px;transform:scaleY(.85)">0009-OP-BL GR</div><div class="t" style="left:1342px;top:178px;font-family:'Liberation Mono',monospace;font-size:14px;color:#1c2a55;-webkit-text-stroke:.45px #1c2a55;transform-origin:0 10.75px;transform:scaleY(.85)">PACK NAME       :</div><div class="t" style="left:1488.800px;top:178px;font-family:'Liberation Mono',monospace;font-size:14px;color:#a5283c;-webkit-text-stroke:.45px #a5283c;transform-origin:0 10.75px;transform:scaleY(.85)">S</div><div class="t" style="left:1342px;top:199px;font-family:'Liberation Mono',monospace;font-size:14px;color:#1c2a55;-webkit-text-stroke:.45px #1c2a55;transform-origin:0 10.75px;transform:scaleY(.85)">ITEM DESCRIPTION:</div><div class="t" style="left:1342px;top:220px;font-family:'Liberation Mono',monospace;font-size:14px;color:#1c2a55;-webkit-text-stroke:.45px #1c2a55;transform-origin:0 10.75px;transform:scaleY(.85)">GROUP NAME1     :</div><div class="t" style="left:1488.800px;top:220px;font-family:'Liberation Mono',monospace;font-size:14px;color:#a5283c;-webkit-text-stroke:.45px #a5283c;transform-origin:0 10.75px;transform:scaleY(.85)">TOP</div><div class="t" style="left:1342px;top:241px;font-family:'Liberation Mono',monospace;font-size:14px;color:#1c2a55;-webkit-text-stroke:.45px #1c2a55;transform-origin:0 10.75px;transform:scaleY(.85)">PUR RATE        :</div><div class="t" style="left:1342px;top:262px;font-family:'Liberation Mono',monospace;font-size:14px;color:#1c2a55;-webkit-text-stroke:.45px #1c2a55;transform-origin:0 10.75px;transform:scaleY(.85)">SALE RATE       :</div><div class="t" style="left:1342px;top:282px;font-family:'Liberation Mono',monospace;font-size:14px;color:#1c2a55;-webkit-text-stroke:.45px #1c2a55;transform-origin:0 10.75px;transform:scaleY(.85)">MRP             :</div><div class="t" style="left:1488.800px;top:282px;font-family:'Liberation Mono',monospace;font-size:14px;color:#a5283c;-webkit-text-stroke:.45px #a5283c;transform-origin:0 10.75px;transform:scaleY(.85)">1</div>
<svg class="a" style="left:1843px;top:48px" width="14" height="13" viewBox="0 0 14 13"><g fill="#e0e0e0" stroke="#3a3a3a" stroke-width="1.3"><rect x=".65" y=".65" width="4.700" height="4.700"/><rect x="7.650" y=".65" width="4.700" height="4.700"/><rect x=".65" y="7.650" width="4.700" height="4.700"/></g><g fill="#3a3a3a"><rect x="2.400" y="2.400" width="1.200" height="1.200"/><rect x="9.400" y="2.400" width="1.200" height="1.200"/><rect x="2.400" y="9.400" width="1.200" height="1.200"/><path d="M7 7h1.500l2 3v-3h2.500v4h-1v2h-1v-1.500h-1v1.500h-1v-2h-1v2h-1z"/></g></svg><div class="wh" style="top:304px;width:524px;height:22px"></div><div class="t" style="left:1342.3px;top:305.7px;font-family:'Liberation Sans',sans-serif;font-size:16px;font-weight:bold;color:#222;transform-origin:0 0;transform:scaleX(1.0020);">Party/Item Transactions-Sale</div><svg class="a" style="left:1842px;top:307px" width="15" height="16" viewBox="0 0 15 16"><path d="M.5 0h8.700l4.800 4.800v10.900H.5z" fill="#3a3a3a"/><path d="M9.200 0v4.800h4.800z" fill="#d3d3d3"/><path d="M9.200 .8v4h4" fill="none" stroke="#3a3a3a" stroke-width="1"/><rect x="3.800" y="8.600" width="7.400" height="2.400" fill="#9a9a9a"/><path d="M3.800 7.500h7.400M3.800 12.100h7.400" stroke="#f4f4f4" stroke-width="1"/></svg><div class="wt" style="top:331px;height:232px"><div class="c h" style="left:0px;top:0;width:27px"></div><div class="t" style="left:1.8px;top:7.6px;font-family:'Liberation Mono',monospace;font-size:10px;color:#1c2240;-webkit-text-stroke:.28px #1c2240;transform-origin:0 7.7px;transform:scaleY(.88)">SNO.</div><div class="c h" style="left:27px;top:0;width:85px"></div><div class="t" style="left:28.8px;top:7.6px;font-family:'Liberation Mono',monospace;font-size:10px;color:#1c2240;-webkit-text-stroke:.28px #1c2240;transform-origin:0 7.7px;transform:scaleY(.88)">ITEM NAME</div><div class="c h" style="left:112px;top:0;width:69px"></div><div class="t" style="left:113.8px;top:7.6px;font-family:'Liberation Mono',monospace;font-size:10px;color:#1c2240;-webkit-text-stroke:.28px #1c2240;transform-origin:0 7.7px;transform:scaleY(.88)">PACK / SIZE</div><div class="c h" style="left:181px;top:0;width:57px"></div><div class="t" style="left:182.8px;top:7.6px;font-family:'Liberation Mono',monospace;font-size:10px;color:#1c2240;-webkit-text-stroke:.28px #1c2240;transform-origin:0 7.7px;transform:scaleY(.88)">ITEM CODE</div><div class="c h" style="left:238px;top:0;width:108px"></div><div class="t" style="left:239.8px;top:7.6px;font-family:'Liberation Mono',monospace;font-size:10px;color:#1c2240;-webkit-text-stroke:.28px #1c2240;transform-origin:0 7.7px;transform:scaleY(.88)">PARTY NAME</div><div class="c h" style="left:346px;top:0;width:69px"></div><div class="t" style="left:347.8px;top:7.6px;font-family:'Liberation Mono',monospace;font-size:10px;color:#1c2240;-webkit-text-stroke:.28px #1c2240;transform-origin:0 7.7px;transform:scaleY(.88)">BILL NUMBER</div><div class="c h" style="left:415px;top:0;width:64px"></div><div class="t" style="left:416.8px;top:7.6px;font-family:'Liberation Mono',monospace;font-size:10px;color:#1c2240;-webkit-text-stroke:.28px #1c2240;transform-origin:0 7.7px;transform:scaleY(.88)">BILL DATE</div><div class="c h" style="left:479px;top:0;width:81px"></div><div class="t" style="left:480.8px;top:7.6px;font-family:'Liberation Mono',monospace;font-size:10px;color:#1c2240;-webkit-text-stroke:.28px #1c2240;transform-origin:0 7.7px;transform:scaleY(.88)">BILL AMOUNT</div><div class="c" style="left:0px;top:21px;width:27px"></div><div class="t" style="left:2.2px;top:26.0px;font-family:'Liberation Sans',sans-serif;font-size:12px;color:#111;transform-origin:0 0;transform:scaleX(0.9800);">1</div><div class="c" style="left:27px;top:21px;width:85px"></div><div class="t" style="left:29.0px;top:26.0px;font-family:'Liberation Sans',sans-serif;font-size:12px;color:#111;transform-origin:0 0;transform:scaleX(0.9396);">0009-OP-BL GR</div><div class="c" style="left:112px;top:21px;width:69px"></div><div class="t" style="left:114.3px;top:26.0px;font-family:'Liberation Sans',sans-serif;font-size:12px;color:#111;transform-origin:0 0;transform:scaleX(0.9500);">S</div><div class="c" style="left:181px;top:21px;width:57px"></div><div class="t" style="left:183.1px;top:26.0px;font-family:'Liberation Sans',sans-serif;font-size:12px;color:#111;transform-origin:0 0;transform:scaleX(0.9833);">51465465</div><div class="c" style="left:238px;top:21px;width:108px"></div><div class="t" style="left:239.8px;top:26.0px;font-family:'Liberation Sans',sans-serif;font-size:12px;color:#111;transform-origin:0 0;transform:scaleX(0.9409);">LOGIC ERP -Abohar</div><div class="c" style="left:346px;top:21px;width:69px"></div><div class="t" style="left:347.8px;top:26.0px;font-family:'Liberation Sans',sans-serif;font-size:12px;color:#111;transform-origin:0 0;transform:scaleX(0.9380);">GST-216</div><div class="c" style="left:415px;top:21px;width:64px"></div><div class="t" style="left:417.2px;top:26.0px;font-family:'Liberation Sans',sans-serif;font-size:12px;color:#111;transform-origin:0 0;transform:scaleX(1.0170);">16/02/2026</div><div class="c" style="left:479px;top:21px;width:81px"></div><div class="t" style="left:497.9px;top:26.0px;font-family:'Liberation Sans',sans-serif;font-size:12px;color:#111;transform-origin:0 0;transform:scaleX(0.9850);">92328.00</div><div class="c" style="left:0px;top:42px;width:27px"></div><div class="t" style="left:2.2px;top:47.0px;font-family:'Liberation Sans',sans-serif;font-size:12px;color:#111;transform-origin:0 0;transform:scaleX(0.9800);">2</div><div class="c" style="left:27px;top:42px;width:85px"></div><div class="t" style="left:29.0px;top:47.0px;font-family:'Liberation Sans',sans-serif;font-size:12px;color:#111;transform-origin:0 0;transform:scaleX(0.9396);">0009-OP-BL GR</div><div class="c" style="left:112px;top:42px;width:69px"></div><div class="t" style="left:114.3px;top:47.0px;font-family:'Liberation Sans',sans-serif;font-size:12px;color:#111;transform-origin:0 0;transform:scaleX(0.9500);">S</div><div class="c" style="left:181px;top:42px;width:57px"></div><div class="t" style="left:183.1px;top:47.0px;font-family:'Liberation Sans',sans-serif;font-size:12px;color:#111;transform-origin:0 0;transform:scaleX(0.9833);">51465465</div><div class="c" style="left:238px;top:42px;width:108px"></div><div class="t" style="left:239.8px;top:47.0px;font-family:'Liberation Sans',sans-serif;font-size:12px;color:#111;transform-origin:0 0;transform:scaleX(0.9409);">LOGIC ERP -Abohar</div><div class="c" style="left:346px;top:42px;width:69px"></div><div class="t" style="left:347.8px;top:47.0px;font-family:'Liberation Sans',sans-serif;font-size:12px;color:#111;transform-origin:0 0;transform:scaleX(0.9380);">GST-175</div><div class="c" style="left:415px;top:42px;width:64px"></div><div class="t" style="left:417.2px;top:47.0px;font-family:'Liberation Sans',sans-serif;font-size:12px;color:#111;transform-origin:0 0;transform:scaleX(1.0170);">06/01/2026</div><div class="c" style="left:479px;top:42px;width:81px"></div><div class="t" style="left:497.9px;top:47.0px;font-family:'Liberation Sans',sans-serif;font-size:12px;color:#111;transform-origin:0 0;transform:scaleX(0.9850);">73767.00</div><div class="c" style="left:0px;top:63px;width:27px"></div><div class="t" style="left:2.2px;top:68.0px;font-family:'Liberation Sans',sans-serif;font-size:12px;color:#111;transform-origin:0 0;transform:scaleX(0.9800);">3</div><div class="c" style="left:27px;top:63px;width:85px"></div><div class="t" style="left:29.0px;top:68.0px;font-family:'Liberation Sans',sans-serif;font-size:12px;color:#111;transform-origin:0 0;transform:scaleX(0.9396);">0009-OP-BL GR</div><div class="c" style="left:112px;top:63px;width:69px"></div><div class="t" style="left:114.3px;top:68.0px;font-family:'Liberation Sans',sans-serif;font-size:12px;color:#111;transform-origin:0 0;transform:scaleX(0.9500);">S</div><div class="c" style="left:181px;top:63px;width:57px"></div><div class="t" style="left:183.1px;top:68.0px;font-family:'Liberation Sans',sans-serif;font-size:12px;color:#111;transform-origin:0 0;transform:scaleX(0.9833);">51465465</div><div class="c" style="left:238px;top:63px;width:108px"></div><div class="t" style="left:239.8px;top:68.0px;font-family:'Liberation Sans',sans-serif;font-size:12px;color:#111;transform-origin:0 0;transform:scaleX(0.9409);">LOGIC ERP -Abohar</div><div class="c" style="left:346px;top:63px;width:69px"></div><div class="t" style="left:347.8px;top:68.0px;font-family:'Liberation Sans',sans-serif;font-size:12px;color:#111;transform-origin:0 0;transform:scaleX(0.9380);">GST-217</div><div class="c" style="left:415px;top:63px;width:64px"></div><div class="t" style="left:417.2px;top:68.0px;font-family:'Liberation Sans',sans-serif;font-size:12px;color:#111;transform-origin:0 0;transform:scaleX(1.0170);">20/12/2025</div><div class="c" style="left:479px;top:63px;width:81px"></div><div class="t" style="left:497.9px;top:68.0px;font-family:'Liberation Sans',sans-serif;font-size:12px;color:#111;transform-origin:0 0;transform:scaleX(0.9850);">37762.00</div><div class="c" style="left:0px;top:84px;width:27px"></div><div class="t" style="left:2.2px;top:89.0px;font-family:'Liberation Sans',sans-serif;font-size:12px;color:#111;transform-origin:0 0;transform:scaleX(0.9800);">4</div><div class="c" style="left:27px;top:84px;width:85px"></div><div class="t" style="left:29.0px;top:89.0px;font-family:'Liberation Sans',sans-serif;font-size:12px;color:#111;transform-origin:0 0;transform:scaleX(0.9396);">0009-OP-BL GR</div><div class="c" style="left:112px;top:84px;width:69px"></div><div class="t" style="left:114.3px;top:89.0px;font-family:'Liberation Sans',sans-serif;font-size:12px;color:#111;transform-origin:0 0;transform:scaleX(0.9500);">S</div><div class="c" style="left:181px;top:84px;width:57px"></div><div class="t" style="left:183.1px;top:89.0px;font-family:'Liberation Sans',sans-serif;font-size:12px;color:#111;transform-origin:0 0;transform:scaleX(0.9833);">51465465</div><div class="c" style="left:238px;top:84px;width:108px"></div><div class="t" style="left:239.8px;top:89.0px;font-family:'Liberation Sans',sans-serif;font-size:12px;color:#111;transform-origin:0 0;transform:scaleX(0.9409);">LOGIC ERP -Abohar</div><div class="c" style="left:346px;top:84px;width:69px"></div><div class="t" style="left:347.8px;top:89.0px;font-family:'Liberation Sans',sans-serif;font-size:12px;color:#111;transform-origin:0 0;transform:scaleX(0.9380);">GST-154</div><div class="c" style="left:415px;top:84px;width:64px"></div><div class="t" style="left:417.2px;top:89.0px;font-family:'Liberation Sans',sans-serif;font-size:12px;color:#111;transform-origin:0 0;transform:scaleX(1.0170);">10/10/2025</div><div class="c" style="left:479px;top:84px;width:81px"></div><div class="t" style="left:497.9px;top:89.0px;font-family:'Liberation Sans',sans-serif;font-size:12px;color:#111;transform-origin:0 0;transform:scaleX(0.9850);">97598.00</div><div class="c" style="left:0px;top:105px;width:27px"></div><div class="t" style="left:2.2px;top:110.0px;font-family:'Liberation Sans',sans-serif;font-size:12px;color:#111;transform-origin:0 0;transform:scaleX(0.9800);">5</div><div class="c" style="left:27px;top:105px;width:85px"></div><div class="t" style="left:29.0px;top:110.0px;font-family:'Liberation Sans',sans-serif;font-size:12px;color:#111;transform-origin:0 0;transform:scaleX(0.9396);">0009-OP-BL GR</div><div class="c" style="left:112px;top:105px;width:69px"></div><div class="t" style="left:114.3px;top:110.0px;font-family:'Liberation Sans',sans-serif;font-size:12px;color:#111;transform-origin:0 0;transform:scaleX(0.9500);">S</div><div class="c" style="left:181px;top:105px;width:57px"></div><div class="t" style="left:183.1px;top:110.0px;font-family:'Liberation Sans',sans-serif;font-size:12px;color:#111;transform-origin:0 0;transform:scaleX(0.9833);">51465465</div><div class="c" style="left:238px;top:105px;width:108px"></div><div class="t" style="left:239.8px;top:110.0px;font-family:'Liberation Sans',sans-serif;font-size:12px;color:#111;transform-origin:0 0;transform:scaleX(0.9409);">LOGIC ERP -Abohar</div><div class="c" style="left:346px;top:105px;width:69px"></div><div class="t" style="left:347.8px;top:110.0px;font-family:'Liberation Sans',sans-serif;font-size:12px;color:#111;transform-origin:0 0;transform:scaleX(0.9380);">GST-154</div><div class="c" style="left:415px;top:105px;width:64px"></div><div class="t" style="left:417.2px;top:110.0px;font-family:'Liberation Sans',sans-serif;font-size:12px;color:#111;transform-origin:0 0;transform:scaleX(1.0170);">10/10/2025</div><div class="c" style="left:479px;top:105px;width:81px"></div><div class="t" style="left:497.9px;top:110.0px;font-family:'Liberation Sans',sans-serif;font-size:12px;color:#111;transform-origin:0 0;transform:scaleX(0.9850);">97598.00</div><div class="c" style="left:0px;top:126px;width:27px"></div><div class="t" style="left:2.2px;top:131.0px;font-family:'Liberation Sans',sans-serif;font-size:12px;color:#111;transform-origin:0 0;transform:scaleX(0.9800);">6</div><div class="c" style="left:27px;top:126px;width:85px"></div><div class="t" style="left:29.0px;top:131.0px;font-family:'Liberation Sans',sans-serif;font-size:12px;color:#111;transform-origin:0 0;transform:scaleX(0.9396);">0009-OP-BL GR</div><div class="c" style="left:112px;top:126px;width:69px"></div><div class="t" style="left:114.3px;top:131.0px;font-family:'Liberation Sans',sans-serif;font-size:12px;color:#111;transform-origin:0 0;transform:scaleX(0.9500);">S</div><div class="c" style="left:181px;top:126px;width:57px"></div><div class="t" style="left:183.1px;top:131.0px;font-family:'Liberation Sans',sans-serif;font-size:12px;color:#111;transform-origin:0 0;transform:scaleX(0.9833);">51465465</div><div class="c" style="left:238px;top:126px;width:108px"></div><div class="t" style="left:239.8px;top:131.0px;font-family:'Liberation Sans',sans-serif;font-size:12px;color:#111;transform-origin:0 0;transform:scaleX(0.9409);">LOGIC ERP -Abohar</div><div class="c" style="left:346px;top:126px;width:69px"></div><div class="t" style="left:347.8px;top:131.0px;font-family:'Liberation Sans',sans-serif;font-size:12px;color:#111;transform-origin:0 0;transform:scaleX(0.9380);">GST-154</div><div class="c" style="left:415px;top:126px;width:64px"></div><div class="t" style="left:417.2px;top:131.0px;font-family:'Liberation Sans',sans-serif;font-size:12px;color:#111;transform-origin:0 0;transform:scaleX(1.0170);">10/10/2025</div><div class="c" style="left:479px;top:126px;width:81px"></div><div class="t" style="left:497.9px;top:131.0px;font-family:'Liberation Sans',sans-serif;font-size:12px;color:#111;transform-origin:0 0;transform:scaleX(0.9850);">97598.00</div><div class="c" style="left:0px;top:147px;width:27px"></div><div class="t" style="left:2.2px;top:152.0px;font-family:'Liberation Sans',sans-serif;font-size:12px;color:#111;transform-origin:0 0;transform:scaleX(0.9800);">7</div><div class="c" style="left:27px;top:147px;width:85px"></div><div class="t" style="left:29.0px;top:152.0px;font-family:'Liberation Sans',sans-serif;font-size:12px;color:#111;transform-origin:0 0;transform:scaleX(0.9396);">0009-OP-BL GR</div><div class="c" style="left:112px;top:147px;width:69px"></div><div class="t" style="left:114.3px;top:152.0px;font-family:'Liberation Sans',sans-serif;font-size:12px;color:#111;transform-origin:0 0;transform:scaleX(0.9500);">S</div><div class="c" style="left:181px;top:147px;width:57px"></div><div class="t" style="left:183.1px;top:152.0px;font-family:'Liberation Sans',sans-serif;font-size:12px;color:#111;transform-origin:0 0;transform:scaleX(0.9833);">51465465</div><div class="c" style="left:238px;top:147px;width:108px"></div><div class="t" style="left:239.8px;top:152.0px;font-family:'Liberation Sans',sans-serif;font-size:12px;color:#111;transform-origin:0 0;transform:scaleX(0.9409);">LOGIC ERP -Abohar</div><div class="c" style="left:346px;top:147px;width:69px"></div><div class="t" style="left:347.8px;top:152.0px;font-family:'Liberation Sans',sans-serif;font-size:12px;color:#111;transform-origin:0 0;transform:scaleX(0.9380);">GST-144</div><div class="c" style="left:415px;top:147px;width:64px"></div><div class="t" style="left:417.2px;top:152.0px;font-family:'Liberation Sans',sans-serif;font-size:12px;color:#111;transform-origin:0 0;transform:scaleX(1.0170);">01/10/2025</div><div class="c" style="left:479px;top:147px;width:81px"></div><div class="c" style="left:0px;top:168px;width:27px"></div><div class="t" style="left:2.2px;top:173.0px;font-family:'Liberation Sans',sans-serif;font-size:12px;color:#111;transform-origin:0 0;transform:scaleX(0.9800);">8</div><div class="c" style="left:27px;top:168px;width:85px"></div><div class="t" style="left:29.0px;top:173.0px;font-family:'Liberation Sans',sans-serif;font-size:12px;color:#111;transform-origin:0 0;transform:scaleX(0.9396);">0009-OP-BL GR</div><div class="c" style="left:112px;top:168px;width:69px"></div><div class="t" style="left:114.3px;top:173.0px;font-family:'Liberation Sans',sans-serif;font-size:12px;color:#111;transform-origin:0 0;transform:scaleX(0.9500);">S</div><div class="c" style="left:181px;top:168px;width:57px"></div><div class="t" style="left:183.1px;top:173.0px;font-family:'Liberation Sans',sans-serif;font-size:12px;color:#111;transform-origin:0 0;transform:scaleX(0.9833);">51465465</div><div class="c" style="left:238px;top:168px;width:108px"></div><div class="t" style="left:239.8px;top:173.0px;font-family:'Liberation Sans',sans-serif;font-size:12px;color:#111;transform-origin:0 0;transform:scaleX(0.9409);">LOGIC ERP -Abohar</div><div class="c" style="left:346px;top:168px;width:69px"></div><div class="t" style="left:347.8px;top:173.0px;font-family:'Liberation Sans',sans-serif;font-size:12px;color:#111;transform-origin:0 0;transform:scaleX(0.9380);">GST-817669</div><div class="c" style="left:415px;top:168px;width:64px"></div><div class="t" style="left:417.2px;top:173.0px;font-family:'Liberation Sans',sans-serif;font-size:12px;color:#111;transform-origin:0 0;transform:scaleX(1.0170);">26/09/2025</div><div class="c" style="left:479px;top:168px;width:81px"></div><div class="c" style="left:0px;top:189px;width:27px"></div><div class="t" style="left:2.2px;top:194.0px;font-family:'Liberation Sans',sans-serif;font-size:12px;color:#111;transform-origin:0 0;transform:scaleX(0.9800);">9</div><div class="c" style="left:27px;top:189px;width:85px"></div><div class="t" style="left:29.0px;top:194.0px;font-family:'Liberation Sans',sans-serif;font-size:12px;color:#111;transform-origin:0 0;transform:scaleX(0.9396);">0009-OP-BL GR</div><div class="c" style="left:112px;top:189px;width:69px"></div><div class="t" style="left:114.3px;top:194.0px;font-family:'Liberation Sans',sans-serif;font-size:12px;color:#111;transform-origin:0 0;transform:scaleX(0.9500);">S</div><div class="c" style="left:181px;top:189px;width:57px"></div><div class="t" style="left:183.1px;top:194.0px;font-family:'Liberation Sans',sans-serif;font-size:12px;color:#111;transform-origin:0 0;transform:scaleX(0.9833);">51465465</div><div class="c" style="left:238px;top:189px;width:108px"></div><div class="t" style="left:239.8px;top:194.0px;font-family:'Liberation Sans',sans-serif;font-size:12px;color:#111;transform-origin:0 0;transform:scaleX(0.9409);">LOGIC ERP -Abohar</div><div class="c" style="left:346px;top:189px;width:69px"></div><div class="t" style="left:347.8px;top:194.0px;font-family:'Liberation Sans',sans-serif;font-size:12px;color:#111;transform-origin:0 0;transform:scaleX(0.9380);">GST-817670</div><div class="c" style="left:415px;top:189px;width:64px"></div><div class="t" style="left:417.2px;top:194.0px;font-family:'Liberation Sans',sans-serif;font-size:12px;color:#111;transform-origin:0 0;transform:scaleX(1.0170);">26/09/2025</div><div class="c" style="left:479px;top:189px;width:81px"></div><div class="t" style="left:497.9px;top:194.0px;font-family:'Liberation Sans',sans-serif;font-size:12px;color:#111;transform-origin:0 0;transform:scaleX(0.9850);">34041.00</div><div class="c" style="left:0px;top:210px;width:27px"></div><div class="t" style="left:2.2px;top:215.0px;font-family:'Liberation Sans',sans-serif;font-size:12px;color:#111;transform-origin:0 0;transform:scaleX(0.9800);">10</div><div class="c" style="left:27px;top:210px;width:85px"></div><div class="t" style="left:29.0px;top:215.0px;font-family:'Liberation Sans',sans-serif;font-size:12px;color:#111;transform-origin:0 0;transform:scaleX(0.9396);">0009-OP-BL GR</div><div class="c" style="left:112px;top:210px;width:69px"></div><div class="t" style="left:114.3px;top:215.0px;font-family:'Liberation Sans',sans-serif;font-size:12px;color:#111;transform-origin:0 0;transform:scaleX(0.9500);">S</div><div class="c" style="left:181px;top:210px;width:57px"></div><div class="t" style="left:183.1px;top:215.0px;font-family:'Liberation Sans',sans-serif;font-size:12px;color:#111;transform-origin:0 0;transform:scaleX(0.9833);">51465465</div><div class="c" style="left:238px;top:210px;width:108px"></div><div class="t" style="left:239.8px;top:215.0px;font-family:'Liberation Sans',sans-serif;font-size:12px;color:#111;transform-origin:0 0;transform:scaleX(0.9409);">LOGIC ERP -Abohar</div><div class="c" style="left:346px;top:210px;width:69px"></div><div class="t" style="left:347.8px;top:215.0px;font-family:'Liberation Sans',sans-serif;font-size:12px;color:#111;transform-origin:0 0;transform:scaleX(0.9380);">GST-142</div><div class="c" style="left:415px;top:210px;width:64px"></div><div class="t" style="left:417.2px;top:215.0px;font-family:'Liberation Sans',sans-serif;font-size:12px;color:#111;transform-origin:0 0;transform:scaleX(1.0170);">03/09/2025</div><div class="c" style="left:479px;top:210px;width:81px"></div><div class="t" style="left:497.9px;top:215.0px;font-family:'Liberation Sans',sans-serif;font-size:12px;color:#111;transform-origin:0 0;transform:scaleX(0.9850);">31971.00</div><div class="a" style="left:0;top:231px;width:560px;height:1px;background:#3a3a3a"></div></div>
<div class="wh" style="top:566px;width:524px;height:22px"></div><div class="t" style="left:1342.3px;top:569.4px;font-family:'Liberation Sans',sans-serif;font-size:16px;font-weight:bold;color:#222;transform-origin:0 0;transform:scaleX(1.0022);">Party/Lot Transactions-Sale</div><svg class="a" style="left:1842px;top:571px" width="15" height="16" viewBox="0 0 15 16"><path d="M.5 0h8.700l4.800 4.800v10.900H.5z" fill="#3a3a3a"/><path d="M9.200 0v4.800h4.800z" fill="#d3d3d3"/><path d="M9.200 .8v4h4" fill="none" stroke="#3a3a3a" stroke-width="1"/><rect x="3.800" y="8.600" width="7.400" height="2.400" fill="#9a9a9a"/><path d="M3.800 7.500h7.400M3.800 12.100h7.400" stroke="#f4f4f4" stroke-width="1"/></svg><div class="wt" style="top:593px;height:232px"><div class="c h" style="left:0px;top:0;width:27px"></div><div class="t" style="left:1.8px;top:8.3px;font-family:'Liberation Mono',monospace;font-size:10px;color:#1c2240;-webkit-text-stroke:.28px #1c2240;transform-origin:0 7.7px;transform:scaleY(.88)">SNO.</div><div class="c h" style="left:27px;top:0;width:85px"></div><div class="t" style="left:28.8px;top:8.3px;font-family:'Liberation Mono',monospace;font-size:10px;color:#1c2240;-webkit-text-stroke:.28px #1c2240;transform-origin:0 7.7px;transform:scaleY(.88)">ITEM NAME</div><div class="c h" style="left:112px;top:0;width:69px"></div><div class="t" style="left:113.8px;top:8.3px;font-family:'Liberation Mono',monospace;font-size:10px;color:#1c2240;-webkit-text-stroke:.28px #1c2240;transform-origin:0 7.7px;transform:scaleY(.88)">PACK / SIZE</div><div class="c h" style="left:181px;top:0;width:57px"></div><div class="t" style="left:182.8px;top:8.3px;font-family:'Liberation Mono',monospace;font-size:10px;color:#1c2240;-webkit-text-stroke:.28px #1c2240;transform-origin:0 7.7px;transform:scaleY(.88)">ITEM CODE</div><div class="c h" style="left:238px;top:0;width:108px"></div><div class="t" style="left:239.8px;top:8.3px;font-family:'Liberation Mono',monospace;font-size:10px;color:#1c2240;-webkit-text-stroke:.28px #1c2240;transform-origin:0 7.7px;transform:scaleY(.88)">PARTY NAME</div><div class="c h" style="left:346px;top:0;width:69px"></div><div class="t" style="left:347.8px;top:8.3px;font-family:'Liberation Mono',monospace;font-size:10px;color:#1c2240;-webkit-text-stroke:.28px #1c2240;transform-origin:0 7.7px;transform:scaleY(.88)">BILL NUMBER</div><div class="c h" style="left:415px;top:0;width:64px"></div><div class="t" style="left:416.8px;top:8.3px;font-family:'Liberation Mono',monospace;font-size:10px;color:#1c2240;-webkit-text-stroke:.28px #1c2240;transform-origin:0 7.7px;transform:scaleY(.88)">BILL DATE</div><div class="c h" style="left:479px;top:0;width:81px"></div><div class="t" style="left:480.8px;top:8.3px;font-family:'Liberation Mono',monospace;font-size:10px;color:#1c2240;-webkit-text-stroke:.28px #1c2240;transform-origin:0 7.7px;transform:scaleY(.88)">BILL AMOUNT</div><div class="c" style="left:0px;top:21px;width:27px"></div><div class="t" style="left:2.2px;top:26.7px;font-family:'Liberation Sans',sans-serif;font-size:12px;color:#111;transform-origin:0 0;transform:scaleX(0.9800);">1</div><div class="c" style="left:27px;top:21px;width:85px"></div><div class="t" style="left:29.0px;top:26.7px;font-family:'Liberation Sans',sans-serif;font-size:12px;color:#111;transform-origin:0 0;transform:scaleX(0.9396);">0009-OP-BL GR</div><div class="c" style="left:112px;top:21px;width:69px"></div><div class="t" style="left:114.3px;top:26.7px;font-family:'Liberation Sans',sans-serif;font-size:12px;color:#111;transform-origin:0 0;transform:scaleX(0.9500);">S</div><div class="c" style="left:181px;top:21px;width:57px"></div><div class="t" style="left:183.1px;top:26.7px;font-family:'Liberation Sans',sans-serif;font-size:12px;color:#111;transform-origin:0 0;transform:scaleX(0.9833);">51465465</div><div class="c" style="left:238px;top:21px;width:108px"></div><div class="t" style="left:239.8px;top:26.7px;font-family:'Liberation Sans',sans-serif;font-size:12px;color:#111;transform-origin:0 0;transform:scaleX(0.9409);">LOGIC ERP -Abohar</div><div class="c" style="left:346px;top:21px;width:69px"></div><div class="t" style="left:347.8px;top:26.7px;font-family:'Liberation Sans',sans-serif;font-size:12px;color:#111;transform-origin:0 0;transform:scaleX(0.9380);">GST-216</div><div class="c" style="left:415px;top:21px;width:64px"></div><div class="t" style="left:417.2px;top:26.7px;font-family:'Liberation Sans',sans-serif;font-size:12px;color:#111;transform-origin:0 0;transform:scaleX(1.0170);">16/02/2026</div><div class="c" style="left:479px;top:21px;width:81px"></div><div class="t" style="left:497.9px;top:26.7px;font-family:'Liberation Sans',sans-serif;font-size:12px;color:#111;transform-origin:0 0;transform:scaleX(0.9850);">92328.00</div><div class="c" style="left:0px;top:42px;width:27px"></div><div class="t" style="left:2.2px;top:47.7px;font-family:'Liberation Sans',sans-serif;font-size:12px;color:#111;transform-origin:0 0;transform:scaleX(0.9800);">2</div><div class="c" style="left:27px;top:42px;width:85px"></div><div class="t" style="left:29.0px;top:47.7px;font-family:'Liberation Sans',sans-serif;font-size:12px;color:#111;transform-origin:0 0;transform:scaleX(0.9396);">0009-OP-BL GR</div><div class="c" style="left:112px;top:42px;width:69px"></div><div class="t" style="left:114.3px;top:47.7px;font-family:'Liberation Sans',sans-serif;font-size:12px;color:#111;transform-origin:0 0;transform:scaleX(0.9500);">S</div><div class="c" style="left:181px;top:42px;width:57px"></div><div class="t" style="left:183.1px;top:47.7px;font-family:'Liberation Sans',sans-serif;font-size:12px;color:#111;transform-origin:0 0;transform:scaleX(0.9833);">51465465</div><div class="c" style="left:238px;top:42px;width:108px"></div><div class="t" style="left:239.8px;top:47.7px;font-family:'Liberation Sans',sans-serif;font-size:12px;color:#111;transform-origin:0 0;transform:scaleX(0.9409);">LOGIC ERP -Abohar</div><div class="c" style="left:346px;top:42px;width:69px"></div><div class="t" style="left:347.8px;top:47.7px;font-family:'Liberation Sans',sans-serif;font-size:12px;color:#111;transform-origin:0 0;transform:scaleX(0.9380);">GST-175</div><div class="c" style="left:415px;top:42px;width:64px"></div><div class="t" style="left:417.2px;top:47.7px;font-family:'Liberation Sans',sans-serif;font-size:12px;color:#111;transform-origin:0 0;transform:scaleX(1.0170);">06/01/2026</div><div class="c" style="left:479px;top:42px;width:81px"></div><div class="t" style="left:497.9px;top:47.7px;font-family:'Liberation Sans',sans-serif;font-size:12px;color:#111;transform-origin:0 0;transform:scaleX(0.9850);">73767.00</div><div class="c" style="left:0px;top:63px;width:27px"></div><div class="t" style="left:2.2px;top:68.7px;font-family:'Liberation Sans',sans-serif;font-size:12px;color:#111;transform-origin:0 0;transform:scaleX(0.9800);">3</div><div class="c" style="left:27px;top:63px;width:85px"></div><div class="t" style="left:29.0px;top:68.7px;font-family:'Liberation Sans',sans-serif;font-size:12px;color:#111;transform-origin:0 0;transform:scaleX(0.9396);">0009-OP-BL GR</div><div class="c" style="left:112px;top:63px;width:69px"></div><div class="t" style="left:114.3px;top:68.7px;font-family:'Liberation Sans',sans-serif;font-size:12px;color:#111;transform-origin:0 0;transform:scaleX(0.9500);">S</div><div class="c" style="left:181px;top:63px;width:57px"></div><div class="t" style="left:183.1px;top:68.7px;font-family:'Liberation Sans',sans-serif;font-size:12px;color:#111;transform-origin:0 0;transform:scaleX(0.9833);">51465465</div><div class="c" style="left:238px;top:63px;width:108px"></div><div class="t" style="left:239.8px;top:68.7px;font-family:'Liberation Sans',sans-serif;font-size:12px;color:#111;transform-origin:0 0;transform:scaleX(0.9409);">LOGIC ERP -Abohar</div><div class="c" style="left:346px;top:63px;width:69px"></div><div class="t" style="left:347.8px;top:68.7px;font-family:'Liberation Sans',sans-serif;font-size:12px;color:#111;transform-origin:0 0;transform:scaleX(0.9380);">GST-154</div><div class="c" style="left:415px;top:63px;width:64px"></div><div class="t" style="left:417.2px;top:68.7px;font-family:'Liberation Sans',sans-serif;font-size:12px;color:#111;transform-origin:0 0;transform:scaleX(1.0170);">10/10/2025</div><div class="c" style="left:479px;top:63px;width:81px"></div><div class="t" style="left:497.9px;top:68.7px;font-family:'Liberation Sans',sans-serif;font-size:12px;color:#111;transform-origin:0 0;transform:scaleX(0.9850);">97598.00</div><div class="c" style="left:0px;top:84px;width:27px"></div><div class="t" style="left:2.2px;top:89.7px;font-family:'Liberation Sans',sans-serif;font-size:12px;color:#111;transform-origin:0 0;transform:scaleX(0.9800);">4</div><div class="c" style="left:27px;top:84px;width:85px"></div><div class="t" style="left:29.0px;top:89.7px;font-family:'Liberation Sans',sans-serif;font-size:12px;color:#111;transform-origin:0 0;transform:scaleX(0.9396);">0009-OP-BL GR</div><div class="c" style="left:112px;top:84px;width:69px"></div><div class="t" style="left:114.3px;top:89.7px;font-family:'Liberation Sans',sans-serif;font-size:12px;color:#111;transform-origin:0 0;transform:scaleX(0.9500);">S</div><div class="c" style="left:181px;top:84px;width:57px"></div><div class="t" style="left:183.1px;top:89.7px;font-family:'Liberation Sans',sans-serif;font-size:12px;color:#111;transform-origin:0 0;transform:scaleX(0.9833);">51465465</div><div class="c" style="left:238px;top:84px;width:108px"></div><div class="t" style="left:239.8px;top:89.7px;font-family:'Liberation Sans',sans-serif;font-size:12px;color:#111;transform-origin:0 0;transform:scaleX(0.9409);">LOGIC ERP -Abohar</div><div class="c" style="left:346px;top:84px;width:69px"></div><div class="t" style="left:347.8px;top:89.7px;font-family:'Liberation Sans',sans-serif;font-size:12px;color:#111;transform-origin:0 0;transform:scaleX(0.9380);">GST-154</div><div class="c" style="left:415px;top:84px;width:64px"></div><div class="t" style="left:417.2px;top:89.7px;font-family:'Liberation Sans',sans-serif;font-size:12px;color:#111;transform-origin:0 0;transform:scaleX(1.0170);">10/10/2025</div><div class="c" style="left:479px;top:84px;width:81px"></div><div class="t" style="left:497.9px;top:89.7px;font-family:'Liberation Sans',sans-serif;font-size:12px;color:#111;transform-origin:0 0;transform:scaleX(0.9850);">97598.00</div><div class="c" style="left:0px;top:105px;width:27px"></div><div class="t" style="left:2.2px;top:110.7px;font-family:'Liberation Sans',sans-serif;font-size:12px;color:#111;transform-origin:0 0;transform:scaleX(0.9800);">5</div><div class="c" style="left:27px;top:105px;width:85px"></div><div class="t" style="left:29.0px;top:110.7px;font-family:'Liberation Sans',sans-serif;font-size:12px;color:#111;transform-origin:0 0;transform:scaleX(0.9396);">0009-OP-BL GR</div><div class="c" style="left:112px;top:105px;width:69px"></div><div class="t" style="left:114.3px;top:110.7px;font-family:'Liberation Sans',sans-serif;font-size:12px;color:#111;transform-origin:0 0;transform:scaleX(0.9500);">S</div><div class="c" style="left:181px;top:105px;width:57px"></div><div class="t" style="left:183.1px;top:110.7px;font-family:'Liberation Sans',sans-serif;font-size:12px;color:#111;transform-origin:0 0;transform:scaleX(0.9833);">51465465</div><div class="c" style="left:238px;top:105px;width:108px"></div><div class="t" style="left:239.8px;top:110.7px;font-family:'Liberation Sans',sans-serif;font-size:12px;color:#111;transform-origin:0 0;transform:scaleX(0.9409);">LOGIC ERP -Abohar</div><div class="c" style="left:346px;top:105px;width:69px"></div><div class="t" style="left:347.8px;top:110.7px;font-family:'Liberation Sans',sans-serif;font-size:12px;color:#111;transform-origin:0 0;transform:scaleX(0.9380);">GST-154</div><div class="c" style="left:415px;top:105px;width:64px"></div><div class="t" style="left:417.2px;top:110.7px;font-family:'Liberation Sans',sans-serif;font-size:12px;color:#111;transform-origin:0 0;transform:scaleX(1.0170);">10/10/2025</div><div class="c" style="left:479px;top:105px;width:81px"></div><div class="t" style="left:497.9px;top:110.7px;font-family:'Liberation Sans',sans-serif;font-size:12px;color:#111;transform-origin:0 0;transform:scaleX(0.9850);">97598.00</div><div class="c" style="left:0px;top:126px;width:27px"></div><div class="t" style="left:2.2px;top:131.7px;font-family:'Liberation Sans',sans-serif;font-size:12px;color:#111;transform-origin:0 0;transform:scaleX(0.9800);">6</div><div class="c" style="left:27px;top:126px;width:85px"></div><div class="t" style="left:29.0px;top:131.7px;font-family:'Liberation Sans',sans-serif;font-size:12px;color:#111;transform-origin:0 0;transform:scaleX(0.9396);">0009-OP-BL GR</div><div class="c" style="left:112px;top:126px;width:69px"></div><div class="t" style="left:114.3px;top:131.7px;font-family:'Liberation Sans',sans-serif;font-size:12px;color:#111;transform-origin:0 0;transform:scaleX(0.9500);">S</div><div class="c" style="left:181px;top:126px;width:57px"></div><div class="t" style="left:183.1px;top:131.7px;font-family:'Liberation Sans',sans-serif;font-size:12px;color:#111;transform-origin:0 0;transform:scaleX(0.9833);">51465465</div><div class="c" style="left:238px;top:126px;width:108px"></div><div class="t" style="left:239.8px;top:131.7px;font-family:'Liberation Sans',sans-serif;font-size:12px;color:#111;transform-origin:0 0;transform:scaleX(0.9409);">LOGIC ERP -Abohar</div><div class="c" style="left:346px;top:126px;width:69px"></div><div class="t" style="left:347.8px;top:131.7px;font-family:'Liberation Sans',sans-serif;font-size:12px;color:#111;transform-origin:0 0;transform:scaleX(0.9380);">GST-817669</div><div class="c" style="left:415px;top:126px;width:64px"></div><div class="t" style="left:417.2px;top:131.7px;font-family:'Liberation Sans',sans-serif;font-size:12px;color:#111;transform-origin:0 0;transform:scaleX(1.0170);">26/09/2025</div><div class="c" style="left:479px;top:126px;width:81px"></div><div class="c" style="left:0px;top:147px;width:27px"></div><div class="t" style="left:2.2px;top:152.7px;font-family:'Liberation Sans',sans-serif;font-size:12px;color:#111;transform-origin:0 0;transform:scaleX(0.9800);">7</div><div class="c" style="left:27px;top:147px;width:85px"></div><div class="t" style="left:29.0px;top:152.7px;font-family:'Liberation Sans',sans-serif;font-size:12px;color:#111;transform-origin:0 0;transform:scaleX(0.9396);">0009-OP-BL GR</div><div class="c" style="left:112px;top:147px;width:69px"></div><div class="t" style="left:114.3px;top:152.7px;font-family:'Liberation Sans',sans-serif;font-size:12px;color:#111;transform-origin:0 0;transform:scaleX(0.9500);">S</div><div class="c" style="left:181px;top:147px;width:57px"></div><div class="t" style="left:183.1px;top:152.7px;font-family:'Liberation Sans',sans-serif;font-size:12px;color:#111;transform-origin:0 0;transform:scaleX(0.9833);">51465465</div><div class="c" style="left:238px;top:147px;width:108px"></div><div class="t" style="left:239.8px;top:152.7px;font-family:'Liberation Sans',sans-serif;font-size:12px;color:#111;transform-origin:0 0;transform:scaleX(0.9409);">LOGIC ERP -Abohar</div><div class="c" style="left:346px;top:147px;width:69px"></div><div class="t" style="left:347.8px;top:152.7px;font-family:'Liberation Sans',sans-serif;font-size:12px;color:#111;transform-origin:0 0;transform:scaleX(0.9380);">GST-817670</div><div class="c" style="left:415px;top:147px;width:64px"></div><div class="t" style="left:417.2px;top:152.7px;font-family:'Liberation Sans',sans-serif;font-size:12px;color:#111;transform-origin:0 0;transform:scaleX(1.0170);">26/09/2025</div><div class="c" style="left:479px;top:147px;width:81px"></div><div class="t" style="left:497.9px;top:152.7px;font-family:'Liberation Sans',sans-serif;font-size:12px;color:#111;transform-origin:0 0;transform:scaleX(0.9850);">34041.00</div><div class="c" style="left:0px;top:168px;width:27px"></div><div class="t" style="left:2.2px;top:173.7px;font-family:'Liberation Sans',sans-serif;font-size:12px;color:#111;transform-origin:0 0;transform:scaleX(0.9800);">8</div><div class="c" style="left:27px;top:168px;width:85px"></div><div class="t" style="left:29.0px;top:173.7px;font-family:'Liberation Sans',sans-serif;font-size:12px;color:#111;transform-origin:0 0;transform:scaleX(0.9396);">0009-OP-BL GR</div><div class="c" style="left:112px;top:168px;width:69px"></div><div class="t" style="left:114.3px;top:173.7px;font-family:'Liberation Sans',sans-serif;font-size:12px;color:#111;transform-origin:0 0;transform:scaleX(0.9500);">S</div><div class="c" style="left:181px;top:168px;width:57px"></div><div class="t" style="left:183.1px;top:173.7px;font-family:'Liberation Sans',sans-serif;font-size:12px;color:#111;transform-origin:0 0;transform:scaleX(0.9833);">51465465</div><div class="c" style="left:238px;top:168px;width:108px"></div><div class="t" style="left:239.8px;top:173.7px;font-family:'Liberation Sans',sans-serif;font-size:12px;color:#111;transform-origin:0 0;transform:scaleX(0.9409);">LOGIC ERP -Abohar</div><div class="c" style="left:346px;top:168px;width:69px"></div><div class="t" style="left:347.8px;top:173.7px;font-family:'Liberation Sans',sans-serif;font-size:12px;color:#111;transform-origin:0 0;transform:scaleX(0.9380);">GST-142</div><div class="c" style="left:415px;top:168px;width:64px"></div><div class="t" style="left:417.2px;top:173.7px;font-family:'Liberation Sans',sans-serif;font-size:12px;color:#111;transform-origin:0 0;transform:scaleX(1.0170);">03/09/2025</div><div class="c" style="left:479px;top:168px;width:81px"></div><div class="t" style="left:497.9px;top:173.7px;font-family:'Liberation Sans',sans-serif;font-size:12px;color:#111;transform-origin:0 0;transform:scaleX(0.9850);">31971.00</div><div class="c" style="left:0px;top:189px;width:27px"></div><div class="t" style="left:2.2px;top:194.7px;font-family:'Liberation Sans',sans-serif;font-size:12px;color:#111;transform-origin:0 0;transform:scaleX(0.9800);">9</div><div class="c" style="left:27px;top:189px;width:85px"></div><div class="t" style="left:29.0px;top:194.7px;font-family:'Liberation Sans',sans-serif;font-size:12px;color:#111;transform-origin:0 0;transform:scaleX(0.9396);">0009-OP-BL GR</div><div class="c" style="left:112px;top:189px;width:69px"></div><div class="t" style="left:114.3px;top:194.7px;font-family:'Liberation Sans',sans-serif;font-size:12px;color:#111;transform-origin:0 0;transform:scaleX(0.9500);">S</div><div class="c" style="left:181px;top:189px;width:57px"></div><div class="t" style="left:183.1px;top:194.7px;font-family:'Liberation Sans',sans-serif;font-size:12px;color:#111;transform-origin:0 0;transform:scaleX(0.9833);">51465465</div><div class="c" style="left:238px;top:189px;width:108px"></div><div class="t" style="left:239.8px;top:194.7px;font-family:'Liberation Sans',sans-serif;font-size:12px;color:#111;transform-origin:0 0;transform:scaleX(0.9409);">LOGIC ERP -Abohar</div><div class="c" style="left:346px;top:189px;width:69px"></div><div class="t" style="left:347.8px;top:194.7px;font-family:'Liberation Sans',sans-serif;font-size:12px;color:#111;transform-origin:0 0;transform:scaleX(0.9380);">GST-133</div><div class="c" style="left:415px;top:189px;width:64px"></div><div class="t" style="left:417.2px;top:194.7px;font-family:'Liberation Sans',sans-serif;font-size:12px;color:#111;transform-origin:0 0;transform:scaleX(1.0170);">21/08/2025</div><div class="c" style="left:479px;top:189px;width:81px"></div><div class="t" style="left:504.5px;top:194.7px;font-family:'Liberation Sans',sans-serif;font-size:12px;color:#111;transform-origin:0 0;transform:scaleX(0.9850);">8026.00</div><div class="c" style="left:0px;top:210px;width:27px"></div><div class="t" style="left:2.2px;top:215.7px;font-family:'Liberation Sans',sans-serif;font-size:12px;color:#111;transform-origin:0 0;transform:scaleX(0.9800);">10</div><div class="c" style="left:27px;top:210px;width:85px"></div><div class="t" style="left:29.0px;top:215.7px;font-family:'Liberation Sans',sans-serif;font-size:12px;color:#111;transform-origin:0 0;transform:scaleX(0.9396);">0009-OP-BL GR</div><div class="c" style="left:112px;top:210px;width:69px"></div><div class="t" style="left:114.3px;top:215.7px;font-family:'Liberation Sans',sans-serif;font-size:12px;color:#111;transform-origin:0 0;transform:scaleX(0.9500);">S</div><div class="c" style="left:181px;top:210px;width:57px"></div><div class="t" style="left:183.1px;top:215.7px;font-family:'Liberation Sans',sans-serif;font-size:12px;color:#111;transform-origin:0 0;transform:scaleX(0.9833);">51465465</div><div class="c" style="left:238px;top:210px;width:108px"></div><div class="t" style="left:239.8px;top:215.7px;font-family:'Liberation Sans',sans-serif;font-size:12px;color:#111;transform-origin:0 0;transform:scaleX(0.9409);">LOGIC ERP -Abohar</div><div class="c" style="left:346px;top:210px;width:69px"></div><div class="t" style="left:347.8px;top:215.7px;font-family:'Liberation Sans',sans-serif;font-size:12px;color:#111;transform-origin:0 0;transform:scaleX(0.9380);">GST-127</div><div class="c" style="left:415px;top:210px;width:64px"></div><div class="t" style="left:417.2px;top:215.7px;font-family:'Liberation Sans',sans-serif;font-size:12px;color:#111;transform-origin:0 0;transform:scaleX(1.0170);">18/08/2025</div><div class="c" style="left:479px;top:210px;width:81px"></div><div class="a" style="left:0;top:231px;width:560px;height:1px;background:#3a3a3a"></div></div>
<div class="a" style="left:1338px;top:37px;width:532px;height:270px;border:3px solid #ea121e"></div>
<div class="a" style="left:0;top:1008px;width:1893px;height:1px;background:#fff"></div><div class="a" style="left:0;top:1009px;width:1893px;height:1px;background:linear-gradient(90deg,#1b0a1a,#220d10 50%,#2b0903)"></div><div class="a" style="left:0;top:1010px;width:1893px;height:1px;background:linear-gradient(90deg,#2a1b2a,#301a1c 50%,#381915)"></div>
</body>
</html>
